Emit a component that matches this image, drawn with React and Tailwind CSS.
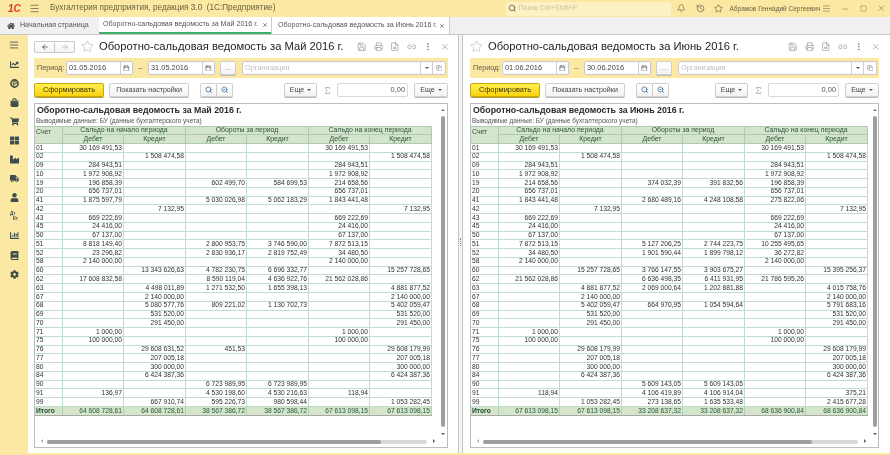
import React from "react";
import { ArrowLeft, ArrowRight, Star, Calendar, Search, Bell, History, Save, Printer, Link2, MoreVertical, X, Copy, SearchCheck, FileSearch, Minus, Square, Sigma, AlignJustify, Menu } from "lucide-react";
import { FaHome, FaChartLine, FaShoppingBag, FaShoppingCart, FaThLarge, FaIndustry, FaTruck, FaUser, FaChartBar, FaBook, FaCog } from "react-icons/fa";

const may = [
["01","30 169 491,53","","","","30 169 491,53",""],
["02","","1 508 474,58","","","","1 508 474,58"],
["09","284 943,51","","","","284 943,51",""],
["10","1 972 908,92","","","","1 972 908,92",""],
["19","196 858,39","","602 499,70","584 699,53","214 658,56",""],
["20","656 737,01","","","","656 737,01",""],
["41","1 875 597,79","","5 030 026,98","5 062 183,29","1 843 441,48",""],
["42","","7 132,95","","","","7 132,95"],
["43","669 222,69","","","","669 222,69",""],
["45","24 416,00","","","","24 416,00",""],
["50","67 137,00","","","","67 137,00",""],
["51","8 818 149,40","","2 800 953,75","3 746 590,00","7 872 513,15",""],
["52","23 296,82","","2 830 936,17","2 819 752,49","34 480,50",""],
["58","2 140 000,00","","","","2 140 000,00",""],
["60","","13 343 626,63","4 782 230,75","6 696 332,77","","15 257 728,65"],
["62","17 608 832,58","","8 590 119,04","4 636 922,76","21 562 028,86",""],
["63","","4 498 011,89","1 271 532,50","1 655 398,13","","4 881 877,52"],
["67","","2 140 000,00","","","","2 140 000,00"],
["68","","5 080 577,76","809 221,02","1 130 702,73","","5 402 059,47"],
["69","","531 520,00","","","","531 520,00"],
["70","","291 450,00","","","","291 450,00"],
["71","1 000,00","","","","1 000,00",""],
["75","100 000,00","","","","100 000,00",""],
["76","","29 608 631,52","451,53","","","29 608 179,99"],
["77","","207 005,18","","","","207 005,18"],
["80","","300 000,00","","","","300 000,00"],
["84","","6 424 387,36","","","","6 424 387,36"],
["90","","","6 723 989,95","6 723 989,95","",""],
["91","136,97","","4 530 198,60","4 530 216,63","118,94",""],
["99","","667 910,74","595 226,73","980 598,44","","1 053 282,45"],
];
const mayTotal = ["Итого","64 608 728,61","64 608 728,61","38 567 386,72","38 567 386,72","67 613 098,15","67 613 098,15"];

const june = [
["01","30 169 491,53","","","","30 169 491,53",""],
["02","","1 508 474,58","","","","1 508 474,58"],
["09","284 943,51","","","","284 943,51",""],
["10","1 972 908,92","","","","1 972 908,92",""],
["19","214 658,56","","374 032,39","391 832,56","196 858,39",""],
["20","656 737,01","","","","656 737,01",""],
["41","1 843 441,48","","2 680 489,16","4 248 108,58","275 822,06",""],
["42","","7 132,95","","","","7 132,95"],
["43","669 222,69","","","","669 222,69",""],
["45","24 416,00","","","","24 416,00",""],
["50","67 137,00","","","","67 137,00",""],
["51","7 872 513,15","","5 127 206,25","2 744 223,75","10 255 495,65",""],
["52","34 480,50","","1 901 590,44","1 899 798,12","36 272,82",""],
["58","2 140 000,00","","","","2 140 000,00",""],
["60","","15 257 728,65","3 766 147,55","3 903 675,27","","15 395 256,37"],
["62","21 562 028,86","","6 636 498,35","6 411 931,95","21 786 595,26",""],
["63","","4 881 877,52","2 069 000,64","1 202 881,88","","4 015 758,76"],
["67","","2 140 000,00","","","","2 140 000,00"],
["68","","5 402 059,47","664 970,95","1 054 594,64","","5 791 683,16"],
["69","","531 520,00","","","","531 520,00"],
["70","","291 450,00","","","","291 450,00"],
["71","1 000,00","","","","1 000,00",""],
["75","100 000,00","","","","100 000,00",""],
["76","","29 608 179,99","","","","29 608 179,99"],
["77","","207 005,18","","","","207 005,18"],
["80","","300 000,00","","","","300 000,00"],
["84","","6 424 387,36","","","","6 424 387,36"],
["90","","","5 609 143,05","5 609 143,05","",""],
["91","118,94","","4 106 419,89","4 106 914,04","","375,21"],
["99","","1 053 282,45","273 138,65","1 635 533,48","","2 415 677,28"],
];
const juneTotal = ["Итого","67 613 098,15","67 613 098,15","33 208 637,32","33 208 637,32","68 636 900,84","68 636 900,84"];

const cols = "grid grid-cols-[28px_61px_62px_61px_62px_61px_62px]";

function ReportTable({ rows, total }) {
  return (
    <div className="w-[397px] text-[6.7px] leading-none text-[#303030]">
      <div className={`${cols} grid-rows-[9px_9px] bg-[#d5e5cb] text-[#2f5540] text-[6.9px]`}>
        <div className="row-span-2 border-r border-b border-t border-[#aecab4] pl-[1px] pt-[2px]">Счет</div>
        <div className="col-span-2 flex items-center justify-center border-r border-b border-t border-[#aecab4]">Сальдо на начало периода</div>
        <div className="col-span-2 flex items-center justify-center border-r border-b border-t border-[#aecab4]">Обороты за период</div>
        <div className="col-span-2 flex items-center justify-center border-r border-b border-t border-[#aecab4]">Сальдо на конец периода</div>
        {["Дебет","Кредит","Дебет","Кредит","Дебет","Кредит"].map((t, i) => (
          <div key={i} className="flex items-center justify-center border-r border-b border-[#aecab4]">{t}</div>
        ))}
      </div>
      {rows.map((r) => (
        <div key={r[0]} className={`${cols} h-[8.77px]`}>
          {r.map((c, i) => (
            <div key={i} className={`flex items-center border-r border-b border-[#c3dcd3] ${i === 0 ? "pl-[1px]" : "justify-end pr-[1px]"}`}>{c}</div>
          ))}
        </div>
      ))}
      <div className={`${cols} h-[9.5px] bg-[#d5e5cb] text-[#2a5a40] border-b border-[#a9a9a9]`}>
        {total.map((c, i) => (
          <div key={i} className={`flex items-center border-r border-[#b3cdb8] ${i === 0 ? "pl-[1px] font-bold text-[#1f4d33]" : "justify-end pr-[1px]"}`}>{c}</div>
        ))}
      </div>
    </div>
  );
}

const btn = "flex items-center justify-center h-[14px] bg-gradient-to-b from-white to-[#f3f3f3] border border-[#cfcfcf] rounded-[2px] text-[7.1px] text-[#444] shadow-[0_1px_0_#bbb]";
const caretUp = "w-0 h-0 border-x-[2px] border-x-transparent border-b-[2px] border-b-[#777]";
const caretDown = "w-0 h-0 border-x-[2px] border-x-transparent border-t-[2px] border-t-[#555]";

function Panel({ title, from, to, rows, total, widthClass, padClass, thumbW, trackW, vRight, vArrowRight, hArrowRight, nav }) {
  return (
    <div className={`${widthClass} ${padClass} h-full flex flex-col bg-white`}>
      <div className="h-[23px] flex items-center shrink-0">
        {nav}
        <Star size={13} strokeWidth={1} className={`text-[#a8a8a8] mr-[5px] shrink-0 ${nav ? "ml-[6px]" : "ml-0"}`} />
        <div className="text-[11.2px] text-[#222] whitespace-nowrap">{title}</div>
        <div className="ml-auto flex items-center gap-[7px] mr-[-1px] text-[#7b7b7b]">
          <Save size={9.5} strokeWidth={1.4} />
          <Printer size={9.5} strokeWidth={1.4} />
          <FileSearch size={9.5} strokeWidth={1.4} />
          <Link2 size={9.5} strokeWidth={1.4} />
          <MoreVertical size={9.5} strokeWidth={2} />
          <X size={9.5} strokeWidth={1.4} />
        </div>
      </div>
      <div className="h-[20px] shrink-0 bg-[#fbe9a3] flex items-center pl-[3px] pr-[2px] text-[7.2px] text-[#555]">
        <span className="w-[29px]">Период:</span>
        <div className="w-[67px] h-[14px] bg-white border border-[#c9c9c9] rounded-[2px] flex items-center pl-[2px] text-[#444] text-[7.4px]">
          <span className="flex-1">{from}</span>
          <span className="w-[12px] h-full border-l border-[#d0d0d0] flex items-center justify-center"><Calendar size={6.5} strokeWidth={2} className="text-[#555]" /></span>
        </div>
        <span className="w-[15px] text-center">–</span>
        <div className="w-[67px] h-[14px] bg-white border border-[#c9c9c9] rounded-[2px] flex items-center pl-[2px] text-[#444] text-[7.4px]">
          <span className="flex-1">{to}</span>
          <span className="w-[12px] h-full border-l border-[#d0d0d0] flex items-center justify-center"><Calendar size={6.5} strokeWidth={2} className="text-[#555]" /></span>
        </div>
        <div className={`${btn} w-[16px] ml-[5px] text-[#999]`}>...</div>
        <div className="flex-1 ml-[6px] h-[14px] bg-white border border-[#c9c9c9] rounded-[2px] flex items-center pl-[2px] text-[#c0c0c0] text-[7.4px]">
          <span className="flex-1">Организация</span>
          <span className="w-[12px] h-full border-l border-[#d0d0d0] flex items-center justify-center"><span className={caretDown}></span></span>
          <span className="w-[13px] h-full border-l border-[#d0d0d0] flex items-center justify-center"><Copy size={6.5} strokeWidth={1.6} className="text-[#555]" /></span>
        </div>
      </div>
      <div className="h-[14px] mt-[5px] shrink-0 flex items-center">
        <div className="w-[70px] h-[14px] flex items-center justify-center rounded-[2px] border border-[#c9a90a] bg-gradient-to-b from-[#fff04d] to-[#f9d400] text-[7.4px] text-[#3c3000] shadow-[0_1px_0_#b8a040]">Сформировать</div>
        <div className={`${btn} w-[80px] ml-[5px]`}>Показать настройки</div>
        <div className={`${btn} w-[17px] ml-[11px] rounded-r-none`}><Search size={7.5} strokeWidth={2.4} className="text-[#34689c]" /></div>
        <div className={`${btn} w-[16px] border-l-0 rounded-l-none`}><SearchCheck size={7.5} strokeWidth={2.2} className="text-[#34689c]" /></div>
        <div className={`${btn} w-[33px] ml-auto gap-[3px]`}>Еще<span className={caretDown}></span></div>
        <Sigma size={9} strokeWidth={1.4} className="text-[#777] mx-[5.5px]" />
        <div className="w-[71px] h-[14px] border border-[#d9d9d9] rounded-[2px] bg-white text-[7.4px] text-[#555] flex items-center justify-end pr-[2px]">0,00</div>
        <div className={`${btn} w-[34px] ml-[6px] gap-[3px]`}>Еще<span className={caretDown}></span></div>
      </div>
      <div className="relative h-[345px] mt-[6px] shrink-0 border border-[#bdbdbd] overflow-hidden">
        <div className="h-[11px] pl-[2px] mt-[1px] text-[8.8px] font-bold text-[#2a2a2a] leading-[11px] whitespace-nowrap">{title}</div>
        <div className="h-[10px] pl-[1px] text-[6.45px] text-[#555] leading-[10px] whitespace-nowrap">Выводимые данные: БУ (данные бухгалтерского учета)</div>
        <ReportTable rows={rows} total={total} />
        <div className={`absolute top-[5px] ${vArrowRight} ${caretUp}`}></div>
        <div className={`absolute top-[12px] w-[4px] h-[311px] rounded-full bg-[#9e9e9e] ${vRight}`}></div>
        <div className={`absolute top-[329px] ${vArrowRight} ${caretDown}`}></div>
        <div className="absolute bottom-[4px] left-[6px] w-0 h-0 border-y-[2px] border-y-transparent border-r-[2px] border-r-[#aaa]"></div>
        <div className={`absolute bottom-[3px] left-[12px] h-[4px] rounded-full bg-[#d8d8d8] ${trackW}`}>
          <div className={`h-full rounded-full bg-[#9e9e9e] ${thumbW}`}></div>
        </div>
        <div className={`absolute bottom-[4px] ${hArrowRight} w-0 h-0 border-y-[2px] border-y-transparent border-l-[2px] border-l-[#555]`}></div>
      </div>
    </div>
  );
}

const side = ["bars", FaChartLine, null, FaShoppingBag, FaShoppingCart, FaThLarge, FaIndustry, FaTruck, FaUser, "dk", FaChartBar, FaBook, FaCog];

function SideIcon({ I }) {
  if (I === "bars") return <AlignJustify size={10} strokeWidth={2} className="text-[#3f4d4d]" />;
  if (I === null) {
    return (
      <svg width="9" height="9" viewBox="0 0 10 10" className="text-[#3f4d4d]">
        <circle cx="5" cy="5" r="4" fill="none" stroke="currentColor" strokeWidth="1.8" />
        <path d="M4 7.5V3h1.8a1.2 1.2 0 0 1 0 2.6H3" fill="none" stroke="currentColor" strokeWidth="1" />
      </svg>
    );
  }
  if (I === "dk") {
    return <div className="text-[4.6px] leading-[4.6px] text-[#3f4d4d] font-bold"><div>Дт</div><div className="pl-[3px]">Кт</div></div>;
  }
  return <I size={9} className="text-[#3f4d4d]" />;
}

export default function App() {
  return (
    <div className="w-[890px] h-[455px] overflow-hidden flex flex-col bg-[#fbe9a3] [font-family:'Liberation_Sans',Arial,sans-serif] blur-[0.3px]">
      <div className="h-[17px] shrink-0 flex items-center bg-[#fbe9a3] text-[#6b6240]">
        <div className="w-[29px] pl-[8px] text-[10px] font-bold italic text-[#d93a26] leading-none">1С</div>
        <Menu size={11} strokeWidth={1.6} className="text-[#5c5a48]" />
        <div className="ml-[10px] text-[8.2px] whitespace-pre">Бухгалтерия предприятия, редакция 3.0  (1С:Предприятие)</div>
        <div className="ml-auto w-[165px] h-[14px] bg-[#fdf1c4] flex items-center pl-[2px] text-[7px] text-[#c9c2a0]">
          <Search size={8.5} strokeWidth={2} className="text-[#4a4a3a] mr-[2px]" />Поиск Ctrl+Shift+F
        </div>
        <Bell size={8.5} strokeWidth={1.6} className="ml-[6px] text-[#55503a]" />
        <History size={9} strokeWidth={1.6} className="ml-[10px] text-[#55503a]" />
        <Star size={9} strokeWidth={1.6} className="ml-[9px] text-[#55503a]" />
        <div className="ml-[7px] text-[6.5px] whitespace-nowrap w-[87px]">Абрамов Геннадий Сергеевич</div>
        <Menu size={9} strokeWidth={1.6} className="text-[#77705a] ml-[5px]" />
        <Minus size={8} strokeWidth={1.6} className="ml-[10px] text-[#77705a]" />
        <Square size={7} strokeWidth={1.6} className="ml-[11px] text-[#77705a]" />
        <X size={8.5} strokeWidth={1.6} className="ml-[10px] mr-[5px] text-[#77705a]" />
      </div>
      <div className="h-[18px] shrink-0 flex items-stretch bg-[#f0f0f0] border-b border-[#c8c8c8] text-[7.1px] text-[#555]">
        <div className="w-[99px] flex items-center pl-[7px]">
          <FaHome size={8} className="text-[#444] mr-[5px]" />
          <span className="whitespace-nowrap">Начальная страница</span>
        </div>
        <div className="w-[172px] bg-white border-b-2 border-[#3fae6a] flex items-center pl-[4px] pr-[3px] whitespace-nowrap">
          <span className="flex-1">Оборотно-сальдовая ведомость за Май 2016 г.</span>
          <X size={6} strokeWidth={2.4} className="text-[#444]" />
        </div>
        <div className="w-[179px] bg-white border-l border-[#ccc] border-r flex items-center pl-[6px] pr-[4px] whitespace-nowrap">
          <span className="flex-1">Оборотно-сальдовая ведомость за Июнь 2016 г.</span>
          <X size={6} strokeWidth={2.4} className="text-[#444]" />
        </div>
      </div>
      <div className="flex-1 flex min-h-0">
        <div className="w-[28px] shrink-0 h-full flex flex-col items-center pt-[5.5px] gap-[10.1px] bg-[#fbe9a3]">
          {side.map((I, i) => (
            <div key={i} className="h-[9px] flex items-center justify-center"><SideIcon I={I} /></div>
          ))}
        </div>
        <div className="flex-1 h-[418px] flex bg-white">
          <Panel
            title="Оборотно-сальдовая ведомость за Май 2016 г."
            from="01.05.2016" to="31.05.2016" rows={may} total={mayTotal}
            widthClass="w-[430px]" padClass="pl-[6px] pr-[10px]"
            vRight="right-[2px]" vArrowRight="right-[2px]" hArrowRight="right-[12px]" trackW="w-[380px]" thumbW="w-[334px]"
            nav={
              <div className="flex">
                <div className="w-[21px] h-[12px] flex items-center justify-center border border-[#c9c9c9] rounded-l-[2px] bg-gradient-to-b from-white to-[#f3f3f3]"><ArrowLeft size={8} strokeWidth={2.2} className="text-[#444]" /></div>
                <div className="w-[20px] h-[12px] flex items-center justify-center border border-l-0 border-[#c9c9c9] rounded-r-[2px] bg-gradient-to-b from-white to-[#f3f3f3]"><ArrowRight size={8} strokeWidth={2} className="text-[#aaa]" /></div>
              </div>
            }
          />
          <div className="w-[5px] h-full shrink-0 bg-[#f4f4f4] border-x border-[#c4c4c4] flex items-center justify-center">
            <span className="w-[1px] h-[8px] border-l border-dotted border-[#888] mb-[4px]"></span>
          </div>
          <Panel
            title="Оборотно-сальдовая ведомость за Июнь 2016 г."
            from="01.06.2016" to="30.06.2016" rows={june} total={juneTotal}
            widthClass="w-[427px]" padClass="pl-[7px] pr-[11px]"
            vRight="right-[1px]" vArrowRight="right-[1px]" hArrowRight="right-[12px]" trackW="w-[375px]" thumbW="w-[329px]"
          />
        </div>
      </div>
    </div>
  );
}
